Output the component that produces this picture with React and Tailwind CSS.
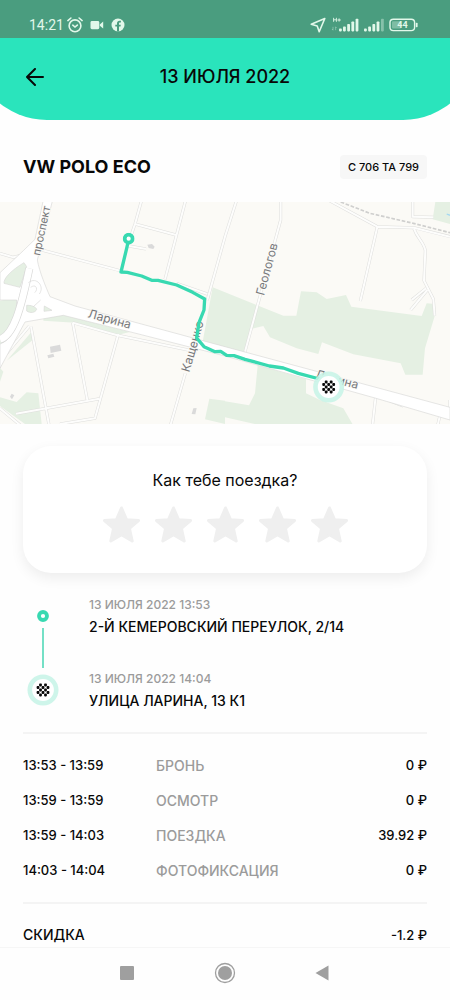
import { useState } from 'react';

const charges = [
    { time: '13:53 - 13:59', name: 'БРОНЬ', price: '0 ₽' },
    { time: '13:59 - 13:59', name: 'ОСМОТР', price: '0 ₽' },
    { time: '13:59 - 14:03', name: 'ПОЕЗДКА', price: '39.92 ₽' },
    { time: '14:03 - 14:04', name: 'ФОТОФИКСАЦИЯ', price: '0 ₽' },
];

const StatusBar = () => (
    <div className="flex h-[38px] items-end justify-between bg-[#4a9d7f] pr-8 pb-[5px] pl-[29px] text-[#e2f8ea]">
        <div className="flex h-4 items-center gap-[3px]">
            <span className="font-[Roboto,sans-serif] text-sm leading-4 font-normal">14:21</span>
            <svg className="h-4 w-4" viewBox="0 0 16 16" fill="none" stroke="currentColor" strokeWidth="1.6" strokeLinecap="round">
                <circle cx="8" cy="8.8" r="5.9" />
                <path d="M.9 3.6 3.9 1M15.1 3.6 12.1 1M5.8 8.2 8 10l2.3-1.9" />
            </svg>
            <svg className="ml-1 h-4 w-[14px]" viewBox="0 0 14 16" fill="currentColor">
                <rect x="0.5" y="4" width="8.8" height="8.2" rx="1.4" />
                <path d="M9.8 7.4 13.2 4.6v6.8L9.8 8.8z" />
            </svg>
            <svg className="ml-1 h-4 w-[14px]" viewBox="0 0 14 16">
                <circle cx="7" cy="8" r="6.5" fill="currentColor" />
                <path d="M6 14.4V9.6H4.3V7.7H6V6.4c0-1.8 1-2.7 2.6-2.7l1.3.1v1.6h-.8c-.8 0-1.1.4-1.1 1v1.3h1.8l-.3 1.9H8v4.8z" fill="#4a9d7f" />
            </svg>
        </div>
        <div className="flex h-4 items-center gap-[5px]">
            <svg className="h-4 w-4" viewBox="0 0 16 16" fill="none" stroke="currentColor" strokeWidth="1.6" strokeLinejoin="round">
                <path d="M14.8 1.5 1.2 7.3l6 1.6 2 5.8z" />
            </svg>
            <svg className="h-4 w-[28px]" viewBox="0 0 28 16" fill="currentColor">
                <path d="M2.6.8v4M5.4.8v4M2.6 2.8h2.8M6.4 3h3.4M8.1 1.4v3.2" stroke="currentColor" strokeWidth=".9" />
                <path d="M2 9.8v3.4M1 12l1 1.2M4.6 13.2V9.8l1 1.2" stroke="currentColor" strokeWidth=".7" opacity=".5" fill="none" />
                <rect x="8" y="11.6" width="2.8" height="2.8" rx=".8" />
                <rect x="12" y="9.4" width="2.8" height="5" rx=".8" />
                <rect x="16.2" y="7" width="2.8" height="7.4" rx=".8" />
                <rect x="20.4" y="4.4" width="2.8" height="10" rx=".8" />
                <rect x="24.6" y="1.8" width="2.8" height="12.6" rx=".8" />
            </svg>
            <svg className="h-4 w-[20px]" viewBox="0 0 20 16" fill="currentColor">
                <rect x="0" y="11.6" width="2.8" height="2.8" rx=".8" />
                <rect x="4.2" y="9.4" width="2.8" height="5" rx=".8" />
                <rect x="8.4" y="7" width="2.8" height="7.4" rx=".8" />
                <rect x="12.6" y="4.4" width="2.8" height="10" rx=".8" />
                <rect x="17" y="1.8" width="2.8" height="12.6" rx=".8" opacity=".4" />
            </svg>
            <svg className="h-4 w-[29px]" viewBox="0 0 29 16">
                <rect x="1" y="2.2" width="24.6" height="11.4" rx="3.4" fill="none" stroke="currentColor" strokeWidth="1.4" />
                <rect x="3" y="4.2" width="9" height="7.4" rx="1" fill="currentColor" opacity=".35" />
                <rect x="26.8" y="5.8" width="1.8" height="4.4" rx=".7" fill="currentColor" />
                <text x="13.4" y="11.2" textAnchor="middle" fontFamily="Roboto, sans-serif" fontSize="9" fontWeight="700" fill="currentColor">44</text>
            </svg>
        </div>
    </div>
);

// Start point: green ring with a white centre
const StartMark = (props) => (
    <svg viewBox="0 0 12 12" {...props}>
        <circle cx="6" cy="6" r="4" fill="#fff" stroke="#38d9b1" strokeWidth="3.8" />
    </svg>
);

const checks = [
    [1, 0], [3, 0],
    [0, 1], [2, 1], [4, 1],
    [1, 2], [3, 2],
    [0, 3], [2, 3], [4, 3],
    [1, 4], [3, 4],
];

const FinishMark = (props) => (
    <svg viewBox="0 0 32 32" {...props}>
        <circle cx="16" cy="16" r="13.2" fill="#fff" stroke="#c5f3e6" strokeOpacity=".85" strokeWidth="4.6" />
        {checks.map(([x, y]) => (
            <rect key={`${x}-${y}`} x={9.6 + x * 2.5} y={9.6 + y * 2.5} width="2.8" height="2.8" rx=".8" fill="#0a0a0a" />
        ))}
    </svg>
);

const minorRoads = [
    'M0 160 40 172 90 160M125 150 360 212',
    'M425 0 405 72 382 140M405 72 528 105M557 0 495 238M383 137l55 10',
    'M530 250 622 282M622 300 675 110 710 0',
    'M93 380 148 680M218 368 262 600M48 641 298 596M355 402 285 655 180 672',
    'M88 378 20 460M218 368 352 406 590 455',
    'M556 520 510 680M0 625 60 675',
    'M842 0 842 60 735 455',
    'M985 0 1132 80 1242 83 1350 110M1132 80 1081 303',
    'M1238 0 1238 50 1300 52M1242 86c10 30 30 40 34 66l-4 90 28 55 4 50M1278 265 1235 300M1282 270 1232 330',
    'M1127 590 1117 680M1320 645 1312 680M1350 600v25M1165 600 1210 618',
];

const RouteMap = () => (
    <svg className="block h-auto w-full" viewBox="0 6 1350 666" role="img" aria-label="Маршрут поездки">
        <rect width="1350" height="680" fill="#fbfaf6" />
        <g fill="#e5f0e3">
            <path d="M638 262 850 347H889L903 274 950 277 980 297 1038 285 1054 320 1265 348 1280 310 1305 312 1305 345 1275 445 1268 524H1216L1202 490 1060 463 966 427 955 462 890 445 810 412 790 378 757 386 735 457 608 425z" />
            <path d="M773 496 918 538V580L960 600 1030 625 1062 680H800L675 652V604L747 616 765 580z" />
            <path d="M1306 6H1350V72L1298 58z" />
            <path d="M628 596 675 602V672L615 658z" />
            <path d="M0 302 60 290 40 420 0 435zM20 482 95 395 98 420zM0 504 10 515 0 545z" />
            <path d="M12 250 72 188 78 230 60 262zM78 315 102 320 108 338 80 336z" />
            <path d="M130 355 190 345 390 396 355 404 225 368 130 362z" />
            <path d="M0 592 50 606 80 577 115 580 125 672H75L0 618z" />
        </g>
        <g fill="none" strokeLinejoin="round">
            {minorRoads.map((d) => <path key={d} d={d} stroke="#dededc" strokeWidth="9" />)}
            {minorRoads.map((d) => <path key={d} d={d} stroke="#fdfdfc" strokeWidth="6" />)}
        </g>
        <path d="M1022 6 1110 40 1240 70 1350 98" fill="none" stroke="#cfcfce" strokeWidth="5" strokeDasharray="11 5" />
        <path d="M1340 42 1350 46" stroke="#a4d8f2" strokeWidth="4" />

        {/* Main street and the interchange on the left */}
        <g fill="#fff" stroke="#d9d9d8" strokeWidth="2">
            <path d="M150 290 225 318 675 440 1350 622V660L1125 594 675 468 400 398 190 346 75 366 0 505V432C35 420 45 380 48 350L50 300H0V218L70 152 105 118 130 0H158L112 180C118 215 138 262 150 290z" />
            <path d="M72 188C35 210 10 235 12 250L60 262 80 200z" fill="#e5f0e3" />
            <path d="M80 316C92 315 108 320 110 328 106 339 90 340 80 333zM133 318 156 331 132 334z" fill="#e5f0e3" />
        </g>
        <path d="M0 418C40 406 62 330 88 205" fill="none" stroke="#d9d9d8" strokeWidth="24" />
        <path d="M0 418C40 406 62 330 88 205" fill="none" stroke="#fff" strokeWidth="20" />
        <path d="M85 248C110 228 135 260 118 282M92 262C108 250 116 268 104 278M100 320 122 300" fill="none" stroke="#d9d9d8" strokeWidth="2" />

        <g fill="#dadada">
            <path d="M150 440 180 434 184 452 152 459zM142 466 160 461 163 470 145 475zM30 590 35 581 43 586 36 598zM442 134 456 132 464 140 460 147 446 144zM580 625 590 624 586 643 575 642z" />
        </g>

        <g fill="#77787b" fontFamily="Inter, sans-serif" fontSize="36" fontWeight="400" stroke="#fbfaf6" strokeWidth="5" paintOrder="stroke">
            <text transform="translate(120 168) rotate(-78)" fontSize="33">проспект</text>
            <text transform="translate(262 352) rotate(15)">Ларина</text>
            <text transform="translate(568 518) rotate(-74)">Кащенко</text>
            <text transform="translate(792 288) rotate(-75)">Геологов</text>
            <text transform="translate(944 533) rotate(15)">Ларина</text>
        </g>

        <path d="M386 118 380 145 363 216 382 217 425 228 455 241 474 241 530 255 578 277 614 297 612 330 597 368 590 414 612 440 645 455 662 454 680 466 702 467 735 478 808 498 850 504 895 520 970 540" fill="none" stroke="#38d9b1" strokeWidth="10" strokeLinejoin="round" />
        <StartMark x="368" y="98" width="36" height="36" />
        <FinishMark x="938" y="513" width="96" height="96" />
    </svg>
);

const TripPoint = ({ date, address }) => (
    <div>
        <p className="text-xs leading-5 text-[#9b9b9b]">{date}</p>
        <p className="mt-[2px] text-sm leading-5">{address}</p>
    </div>
);

const App = () => {
    const [rating, setRating] = useState(0);

    return (
        <div className="flex min-h-screen flex-col overflow-x-clip bg-[#fefefe] font-[Inter,'Noto_Sans',sans-serif] font-medium text-[#080808]">
            <StatusBar />
            <header className="-mx-7 flex h-[82px] items-center rounded-b-[75px] bg-[#2ae4bc] px-[51px] pb-[5px]">
                <button type="button" aria-label="Назад" className="flex h-6 w-6 items-center justify-center">
                    <svg className="h-[18px] w-[18px]" viewBox="0 0 18 18" fill="none" stroke="currentColor" strokeWidth="2" strokeLinecap="round" strokeLinejoin="round">
                        <path d="M17 9H1M9 1 1 9l8 8" />
                    </svg>
                </button>
                <h1 className="flex-1 pr-6 text-center text-lg leading-6">13 ИЮЛЯ 2022</h1>
            </header>

            <main className="flex-1">
                <div className="flex h-[82px] items-center justify-between px-[23px] pt-3">
                    <h2 className="text-lg leading-6 font-bold">VW POLO ECO</h2>
                    <span className="rounded bg-[#f7f7f7] px-2 py-[3px] text-[11px] leading-[18px]">С 706 ТА 799</span>
                </div>

                <RouteMap />

                <section className="mx-[23px] mt-[22px] rounded-[28px] bg-white px-4 pt-[22px] pb-[30px] shadow-[0_5px_14px_rgba(0,0,0,0.07)]">
                    <p className="text-center text-base leading-6 font-normal">Как тебе поездка?</p>
                    <div className="mt-[14px] flex justify-center gap-[15px]">
                        {[1, 2, 3, 4, 5].map((n) => (
                            <button
                                key={n}
                                type="button"
                                aria-label={`Оценка ${n}`}
                                onClick={() => setRating(n)}
                                className={n <= rating ? 'text-[#2ae4bc]' : 'text-[#efefef]'}
                            >
                                <svg className="h-[37px] w-[37px]" viewBox="0 0 37 37" fill="currentColor" stroke="currentColor" strokeWidth="3" strokeLinejoin="round">
                                    <path d="M18.5 2 23.6 13.8 35.5 14.6 26.4 22.4 29.2 35 18.5 28.6 7.8 35 10.6 22.4 1.5 14.6 13.4 13.8z" />
                                </svg>
                            </button>
                        ))}
                    </div>
                </section>

                <section className="mx-[23px] flex gap-[26px] border-b-2 border-[#f4f4f4] pt-[22px] pb-[21px]">
                    <div className="flex w-10 flex-col items-center gap-[6px] pt-[15px] pb-[5px]">
                        <StartMark className="h-3 w-3" />
                        <div className="w-[2px] flex-1 bg-[#74e0c6]" />
                        <FinishMark className="h-8 w-8" />
                    </div>
                    <div className="flex-1 space-y-8">
                        <TripPoint date="13 ИЮЛЯ 2022 13:53" address="2-Й КЕМЕРОВСКИЙ ПЕРЕУЛОК, 2/14" />
                        <TripPoint date="13 ИЮЛЯ 2022 14:04" address="УЛИЦА ЛАРИНА, 13 К1" />
                    </div>
                </section>

                <section className="mx-[23px] border-b-2 border-[#f4f4f4] pt-[14px] pb-[14px]">
                    <table className="w-full text-sm">
                        <tbody>
                            {charges.map((row) => (
                                <tr key={row.name} className="h-[35px]">
                                    <td className="w-[133px] text-[13px]">{row.time}</td>
                                    <td className="text-[#9b9b9b]">{row.name}</td>
                                    <td className="text-right text-[13px]">{row.price}</td>
                                </tr>
                            ))}
                        </tbody>
                    </table>
                </section>

                <div className="mx-[23px] flex justify-between pt-[19px] text-sm leading-6">
                    <span>СКИДКА</span>
                    <span className="text-[13px]">-1.2 ₽</span>
                </div>
            </main>

            <nav className="sticky bottom-0 flex h-[53px] items-center justify-center gap-[74px] border-t border-[#f6f6f6] bg-[#fefefe] pb-[2px] text-[#9f9f9f]">
                <button type="button" aria-label="Недавние">
                    <svg className="h-6 w-6" viewBox="0 0 24 24" fill="currentColor"><rect x="5" y="5" width="14" height="14" rx="1" /></svg>
                </button>
                <button type="button" aria-label="Домой">
                    <svg className="h-6 w-6" viewBox="0 0 24 24" fill="currentColor">
                        <circle cx="12" cy="12" r="9.5" fill="none" stroke="currentColor" strokeWidth="1.3" />
                        <circle cx="12" cy="12" r="7" />
                    </svg>
                </button>
                <button type="button" aria-label="Назад">
                    <svg className="h-6 w-6" viewBox="0 0 24 24" fill="currentColor"><path d="M4.5 12 17.5 4.5v15z" /></svg>
                </button>
            </nav>
        </div>
    );
};

export default App;
